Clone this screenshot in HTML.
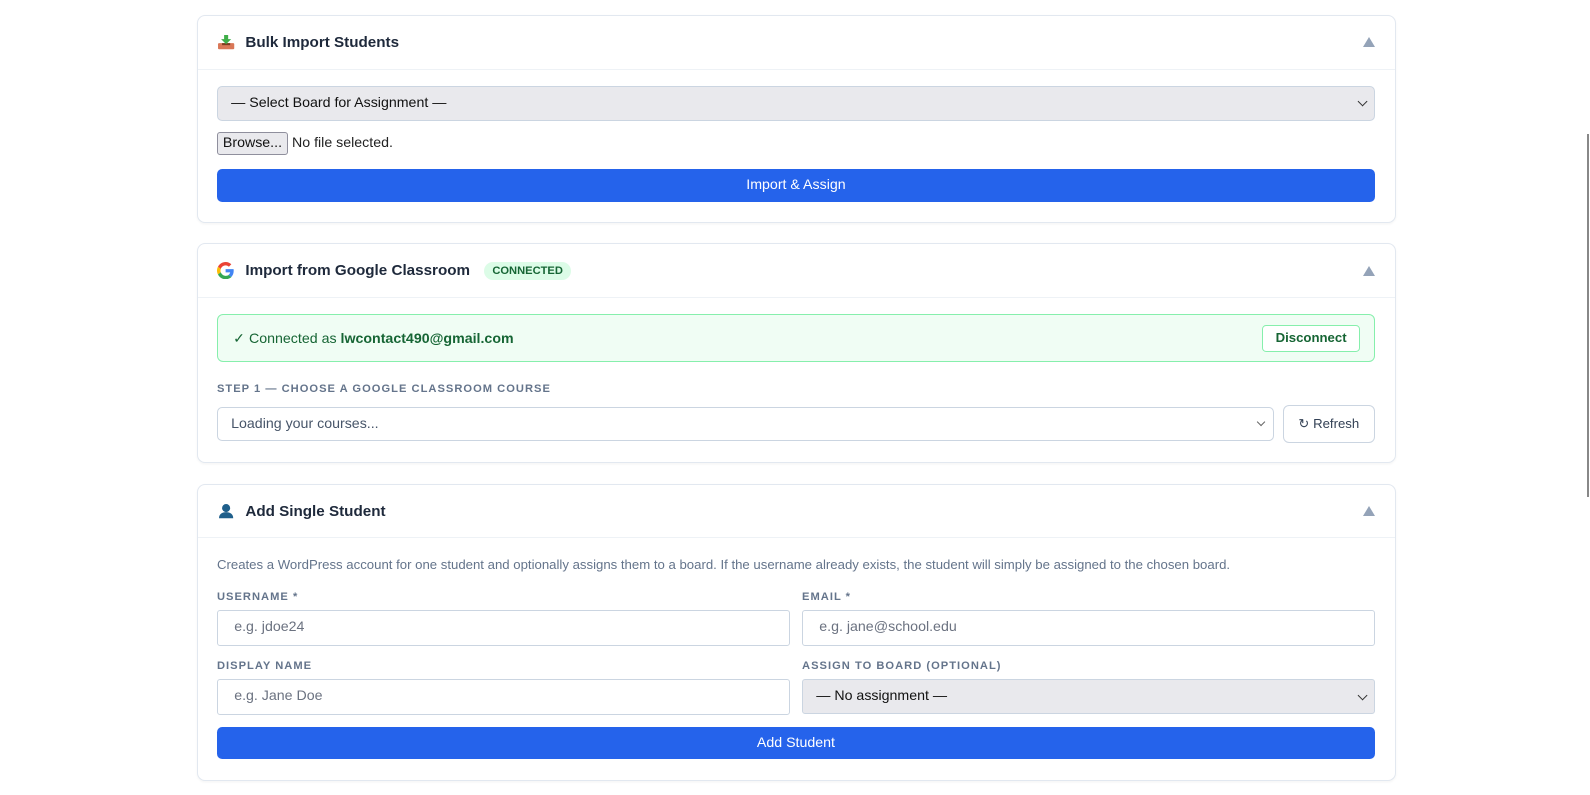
<!DOCTYPE html>
<html><head><style>
*{box-sizing:border-box;margin:0;padding:0}
body{width:1590px;height:795px;background:#fff;font-family:"Liberation Sans",sans-serif;position:relative;overflow:hidden;color:#1e293b}
#w{position:absolute;left:0;top:0;width:1568px;height:784px;zoom:1.014}
.card{position:absolute;left:194px;width:1183px;border:1px solid #e2e8f0;border-radius:8px;background:#fff;box-shadow:0 1px 2px rgba(0,0,0,.04)}
.hd{height:53px;border-bottom:1px solid #eef2f6;display:flex;align-items:center;padding-left:19px;font-weight:bold;font-size:15px;color:#1e293b;position:relative}
.hd .ic{width:18px;margin-right:10px;display:inline-flex;justify-content:center}
.tri{position:absolute;right:20px;top:21px;width:0;height:0;border-left:6px solid transparent;border-right:6px solid transparent;border-bottom:10px solid #94a3b8}
.abs{position:absolute}
.sel{position:absolute;left:19px;width:1142px;height:34px;border:1px solid #cbd5e1;border-radius:5px;background:#e9e9ed;font-size:14px;padding-left:13px;line-height:32px;color:#111}
.chev{position:absolute;right:8px;top:11px;width:7px;height:7px;border-right:1.5px solid #333;border-bottom:1.5px solid #333;transform:rotate(45deg)}
.btn{position:absolute;left:19px;width:1142px;height:32px;background:#2563eb;border-radius:5px;color:#fff;font-size:14px;text-align:center;line-height:32px}
.lbl{position:absolute;font-size:11px;font-weight:bold;letter-spacing:1px;color:#64748b}
.inp{position:absolute;height:35px;border:1px solid #cbd5e1;border-radius:3px;font-size:14px;color:#6b7280;padding-left:16px;line-height:33px;background:#fff}
</style></head><body>
<div class="abs" style="left:1587px;top:134px;width:2px;height:363px;background:#888"></div>
<div id="w">
<div class="card" style="top:15px;height:205px">
 <div class="hd"><span class="ic"><svg width="18" height="16" viewBox="0 0 18 16"><rect x="1" y="9" width="16" height="6" rx="1" fill="#d97757"/><rect x="5" y="9" width="8" height="2" fill="#7a3d20"/><path d="M7 1h4v4h3l-5 5-5-5h3z" fill="#3fae49"/></svg></span>Bulk Import Students<div class="tri"></div></div>
 <div class="sel" style="top:69px">— Select Board for Assignment —<div class="chev"></div></div>
 <div class="abs" style="left:19px;top:114px;width:70px;height:23px;border:1px solid #8f8f9d;border-radius:3px;background:#e9e9ed;font-size:14px;text-align:center;line-height:21px;color:#111">Browse...</div>
 <div class="abs" style="left:93px;top:117px;font-size:14px;color:#222">No file selected.</div>
 <div class="btn" style="top:151px">Import &amp; Assign</div>
</div>

<div class="card" style="top:240px;height:217px">
 <div class="hd"><span class="ic"><svg width="17" height="17" viewBox="0 0 48 48"><path fill="#EA4335" d="M24 9.5c3.5 0 6.6 1.2 9.1 3.6l6.8-6.8C35.8 2.4 30.3 0 24 0 14.6 0 6.6 5.4 2.7 13.2l7.9 6.2C12.5 13.6 17.8 9.5 24 9.5z"/><path fill="#4285F4" d="M46.5 24.5c0-1.6-.1-3.1-.4-4.5H24v9h12.7c-.6 2.9-2.2 5.4-4.7 7.1l7.6 5.9c4.4-4.1 6.9-10.1 6.900-17.5z"/><path fill="#FBBC05" d="M10.5 28.6c-.5-1.4-.8-2.9-.8-4.6s.3-3.2.8-4.6l-7.9-6.2C1 16.6 0 20.2 0 24s1 7.4 2.7 10.8l7.8-6.2z"/><path fill="#34A853" d="M24 48c6.5 0 11.9-2.1 15.9-5.8l-7.6-5.9c-2.1 1.4-4.9 2.3-8.3 2.3-6.2 0-11.5-4.2-13.4-9.9l-7.9 6.2C6.6 42.6 14.6 48 24 48z"/></svg></span>Import from Google Classroom<span style="margin-left:14px;background:#dcfce7;color:#166534;font-size:11px;border-radius:9px;padding:3px 8px">CONNECTED</span><div class="tri"></div></div>
 <div class="abs" style="left:19px;top:69px;width:1142px;height:47px;border:1px solid #86efac;border-radius:6px;background:#f0fdf4">
  <div class="abs" style="left:15px;top:15px;font-size:14px;color:#166534">✓ Connected as <b>lwcontact490@gmail.com</b></div>
  <div class="abs" style="right:14px;top:10px;width:96px;height:26px;border:1px solid #86efac;border-radius:4px;background:#fff;font-size:13px;font-weight:bold;color:#166534;text-align:center;line-height:24px">Disconnect</div>
 </div>
 <div class="lbl" style="left:19px;top:137px">STEP 1 — CHOOSE A GOOGLE CLASSROOM COURSE</div>
 <div class="sel" style="top:160px;width:1042px;height:34px;background:#fff;color:#475569">Loading your courses...<div class="chev" style="border-color:#666;width:6px;height:6px"></div></div>
 <div class="abs" style="left:1070px;top:158px;width:91px;height:38px;border:1px solid #cbd5e1;border-radius:6px;font-size:13px;color:#334155;text-align:center;line-height:36px">↻ Refresh</div>
</div>

<div class="card" style="top:477px;height:293px">
 <div class="hd"><span class="ic"><svg width="16" height="16" viewBox="0 0 16 16"><circle cx="8" cy="5" r="4" fill="#1f5f8b"/><path d="M1 15c0-4 3-6 7-6s7 2 7 6z" fill="#1f5f8b"/></svg></span>Add Single Student<div class="tri"></div></div>
 <div class="abs" style="left:19px;top:71px;font-size:13px;color:#64748b">Creates a WordPress account for one student and optionally assigns them to a board. If the username already exists, the student will simply be assigned to the chosen board.</div>
 <div class="lbl" style="left:19px;top:105px">USERNAME *</div>
 <div class="lbl" style="left:596px;top:105px">EMAIL *</div>
 <div class="inp" style="left:19px;top:124px;width:565px">e.g. jdoe24</div>
 <div class="inp" style="left:596px;top:124px;width:565px">e.g. jane@school.edu</div>
 <div class="lbl" style="left:19px;top:173px">DISPLAY NAME</div>
 <div class="lbl" style="left:596px;top:173px">ASSIGN TO BOARD (OPTIONAL)</div>
 <div class="inp" style="left:19px;top:192px;width:565px">e.g. Jane Doe</div>
 <div class="sel" style="left:596px;top:192px;width:565px;border-radius:3px;padding-left:13px">— No assignment —<div class="chev"></div></div>
 <div class="btn" style="top:239px">Add Student</div>
</div>
</div>
</body></html>
